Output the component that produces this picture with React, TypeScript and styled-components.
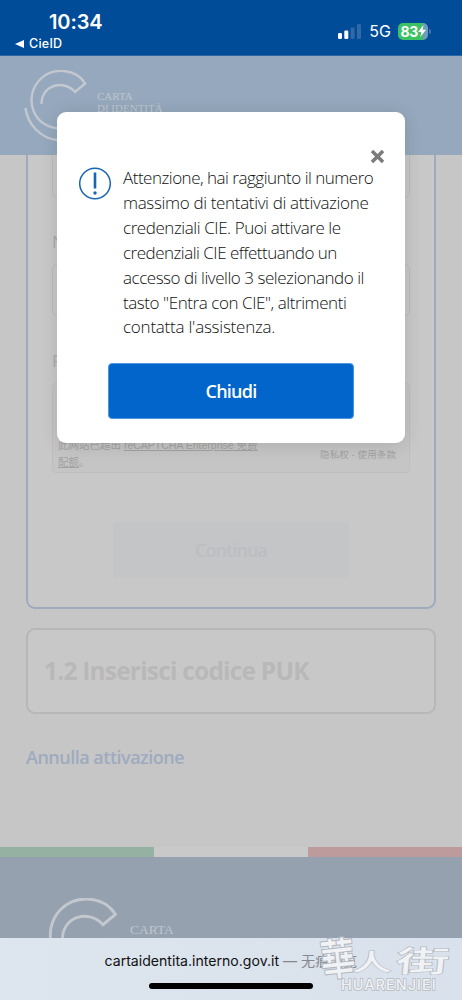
import React from "react";
import styled, { createGlobalStyle } from "styled-components";

const GlobalStyle = createGlobalStyle`
  * { box-sizing: border-box; }
  body { margin: 0; background: #c6c6c6; }
`;

const titleFont = `"Open Sans", "Noto Sans", sans-serif`;
const systemFont = `Inter, "Noto Sans CJK SC", sans-serif`;

const Screen = styled.div`
  position: relative;
  width: 462px;
  height: 1000px;
  overflow: hidden;
  display: flex;
  flex-direction: column;
  background: #c6c6c6;
  font-family: ${titleFont};
`;

const StatusBar = styled.header`
  flex: none;
  height: 56px;
  background: #004c98;
  border-bottom: 1px solid #2c66a2;
  color: #fff;
  display: flex;
  justify-content: space-between;
  font-family: ${systemFont};
`;

const StatusLeft = styled.div`
  padding: 10px 0 0 15px;
  display: flex;
  flex-direction: column;
`;

const Clock = styled.div`
  margin-left: 34px;
  font-size: 20px;
  line-height: 24px;
  font-weight: 600;
  letter-spacing: -0.1px;
`;

const BackLink = styled.div`
  display: flex;
  align-items: center;
  gap: 5px;
  margin-top: 2px;
  font-size: 12.5px;
  line-height: 16px;
  font-weight: 500;
  letter-spacing: 0.25px;
`;

const StatusRight = styled.div`
  display: flex;
  align-items: center;
  height: 20px;
  margin: 21px 31px 0 0;
`;

const Network = styled.span`
  margin: 0 7px 0 7px;
  font-size: 16px;
  letter-spacing: 0;
`;

const Battery = styled.div`
  width: 30px;
  height: 17px;
  border-radius: 5px;
  background: linear-gradient(90deg, #3cc265 83%, #6f9cba 83%);
  display: flex;
  align-items: center;
  padding-left: 2.5px;
  font-size: 14px;
  font-weight: 700;
  letter-spacing: -0.3px;
`;

const BatteryCap = styled.span`
  width: 2px;
  height: 5px;
  margin-left: 1px;
  border-radius: 0 2px 2px 0;
  background: #4478ad;
`;

const SiteHeader = styled.div`
  flex: none;
  height: 99px;
  background: #95a8bd;
  display: flex;
  padding: 14px 0 0 23px;
`;

const LogoName = styled.div<{ $size: number; $line: number; $top: number; $left: number }>`
  padding: ${(p) => p.$top}px 0 0 ${(p) => p.$left}px;
  font-family: "Liberation Serif", serif;
  font-size: ${(p) => p.$size}px;
  line-height: ${(p) => p.$line}px;
  color: #bec5cd;
  white-space: nowrap;
`;

const Main = styled.main`
  flex: none;
  height: 692px;
  padding: 0 26px;
`;

const StepCard = styled.section`
  height: 454px;
  border: 2px solid #9eabbe;
  border-top: 0;
  border-radius: 0 0 9px 9px;
  background: #c8c8c8;
  padding: 0 24px;
  display: flex;
  flex-direction: column;
`;

const Field = styled.div<{ $height: number; $open?: boolean }>`
  flex: none;
  height: ${(p) => p.$height}px;
  border: 1px solid #bbb;
  border-top-width: ${(p) => (p.$open ? 0 : 1)}px;
  border-radius: ${(p) => (p.$open ? "0 0 5px 5px" : "5px")};
`;

const FieldLabel = styled.div<{ $top: number }>`
  margin-top: ${(p) => p.$top}px;
  height: 24px;
  margin-bottom: 10px;
  font-size: 17px;
  line-height: 24px;
  font-weight: 400;
  color: #a8a8a8;
`;

const Captcha = styled.div`
  flex: none;
  height: 90px;
  border: 1px solid #bebebe;
  border-radius: 4px;
  background: #c5c5c5;
  color: #a2a2a2;
  padding: 53px 13px 0 5px;
  display: flex;
  justify-content: space-between;
  font-family: "Liberation Sans", "Noto Sans CJK SC", sans-serif;
  font-size: 10.5px;
  line-height: 17px;
`;

const CaptchaLinks = styled.div`
  padding-top: 9px;
  font-size: 9.5px;
  letter-spacing: 0.1px;
  white-space: nowrap;
`;

const ContinueButton = styled.button`
  align-self: center;
  margin-top: 49px;
  width: 236px;
  height: 56px;
  border: 0;
  border-radius: 4px;
  background: #c3c5c7;
  color: #bcbec1;
  font: 600 18px ${titleFont};
  letter-spacing: -0.9px;
`;

const NextCard = styled.section`
  margin-top: 19px;
  height: 86px;
  border: 2px solid #b7b7b7;
  border-radius: 9px;
  background: #c8c8c8;
  display: flex;
  align-items: center;
  padding-left: 16px;
`;

const NextTitle = styled.h2`
  margin: -2px 0 0;
  font-size: 24.5px;
  font-weight: 700;
  color: #b8b8b8;
  letter-spacing: -0.8px;
  white-space: nowrap;
`;

const CancelLink = styled.a`
  display: block;
  margin-top: 30px;
  font-size: 18px;
  line-height: 26px;
  font-weight: 600;
  letter-spacing: -0.5px;
  color: #9eabbf;
`;

const Flag = styled.div`
  flex: none;
  height: 10px;
  display: grid;
  grid-template-columns: repeat(3, 1fr);
`;

const FlagBand = styled.span<{ $color: string }>`
  background: ${(p) => p.$color};
`;

const Footer = styled.footer`
  flex: none;
  height: 81px;
  overflow: hidden;
  background: #95a1af;
  display: flex;
  padding: 41px 0 0 40px;
`;

const BrowserBar = styled.div`
  flex: none;
  height: 62px;
  background: linear-gradient(90deg, #dde5ee, #d9e1ec);
  display: flex;
  flex-direction: column;
  align-items: center;
  font-family: ${systemFont};
`;

const Address = styled.div`
  margin-top: 14px;
  font-size: 14.1px;
  line-height: 18px;
  color: #111;
  white-space: nowrap;
`;

const AddressNote = styled.span`
  color: #85898f;
`;

const HomeIndicator = styled.div`
  margin-top: 13px;
  width: 164px;
  height: 6px;
  border-radius: 3px;
  background: #000;
`;

const Modal = styled.div`
  position: absolute;
  left: 57px;
  top: 112px;
  width: 348px;
  height: 331px;
  border-radius: 9px;
  background: #fff;
  box-shadow: 0 2px 18px rgba(0, 0, 0, 0.12);
  display: flex;
  flex-direction: column;
`;

const CloseButton = styled.button`
  align-self: flex-end;
  margin: 38px 21px 0 0;
  width: 13px;
  height: 13px;
  padding: 0;
  border: 0;
  background: none;
  line-height: 0;
`;

const Message = styled.div`
  display: flex;
  gap: 12px;
  margin: 3px 0 0 22px;
  height: 174px;
`;

const MessageLines = styled.div`
  font-size: 17px;
  line-height: 24.9px;
  font-weight: 300;
  color: #111;
  white-space: nowrap;
`;

const Line = styled.div<{ $spacing: number }>`
  letter-spacing: ${(p) => p.$spacing}px;
`;

const PrimaryButton = styled.button`
  align-self: center;
  margin: 23px 0 0;
  width: 246px;
  height: 56px;
  border: 1px solid #4d97de;
  border-radius: 4px;
  background: #0265cc;
  color: #fff;
  font: 600 18px ${titleFont};
  letter-spacing: -0.75px;
`;

const Watermark = styled.div`
  position: absolute;
  left: 316px;
  top: 932px;
  width: 140px;
  height: 62px;
  color: #f0f2f5;
  -webkit-text-stroke: 1.5px #b3b8be;
  paint-order: stroke fill;
`;

const Brush = styled.span<{ $x: number; $y: number; $size: number; $scale: string }>`
  position: absolute;
  left: ${(p) => p.$x}px;
  top: ${(p) => p.$y}px;
  font: 500 ${(p) => p.$size}px/1 "Noto Sans CJK TC", sans-serif;
  transform: ${(p) => p.$scale};
  transform-origin: 0 0;
`;

const WatermarkName = styled.span`
  position: absolute;
  left: 25px;
  top: 45px;
  font: 500 14.5px/16px Inter, sans-serif;
  letter-spacing: 1px;
`;

function CieLogo({ width }: { width: number }) {
  return (
    <svg width={width} height={(width * 72) / 66} viewBox="0 0 66 72" fill="none" stroke="#c3c8cf" strokeWidth="2.4">
      <path d="M18.500 34C18.500 15 40.500 9 52 22L62.200 13.500C53-1.500 30-3.500 17 9.500C0 27 9.500 58.500 38 58.500" />
      <path d="M2.500 38C4.500 54 17 68 34 70" />
    </svg>
  );
}

const lines: [string, number][] = [
  ["Attenzione, hai raggiunto il numero", -0.5],
  ["massimo di tentativi di attivazione", -0.34],
  ["credenziali CIE. Puoi attivare le", -0.43],
  ["credenziali CIE effettuando un", -0.5],
  ["accesso di livello 3 selezionando il", -0.46],
  ['tasto "Entra con CIE", altrimenti', -0.43],
  ["contatta l'assistenza.", -0.23],
];

export default function App() {
  return (
    <Screen>
      <GlobalStyle />
      <StatusBar>
        <StatusLeft>
          <Clock>10:34</Clock>
          <BackLink>
            <svg width="9" height="8" viewBox="0 0 9 8"><path d="M0 4L9 0V8Z" fill="#fff" /></svg>
            CieID
          </BackLink>
        </StatusLeft>
        <StatusRight>
          <svg width="24" height="15" viewBox="0 0 24 15">
            <rect x="0" y="9" width="4" height="6" rx="1.200" fill="#fff" />
            <rect x="6.300" y="6.500" width="4" height="8.500" rx="1.200" fill="#fff" />
            <rect x="12.600" y="3.500" width="4" height="11.500" rx="1.200" fill="#3068a8" />
            <rect x="19" y="0" width="4" height="15" rx="1.200" fill="#3068a8" />
          </svg>
          <Network>5G</Network>
          <Battery>
            83
            <svg width="8" height="12" viewBox="0 0 8 12"><path d="M5.500 0L0 7H3.300L2.300 12L8 4.800H4.600Z" fill="#fff" /></svg>
          </Battery>
          <BatteryCap />
        </StatusRight>
      </StatusBar>

      <SiteHeader>
        <CieLogo width={66} />
        <LogoName $size={11} $line={12} $top={20} $left={8}>CARTA<br />DI IDENTITÀ</LogoName>
      </SiteHeader>

      <Main>
        <StepCard>
          <Field $height={43} $open />
          <FieldLabel $top={32}>Numero</FieldLabel>
          <Field $height={52} />
          <FieldLabel $top={33}>Per</FieldLabel>
          <Captcha>
            <div>
              此网站已超出 <u>reCAPTCHA Enterprise 免费</u><br /><u>配额</u>。
            </div>
            <CaptchaLinks>隐私权 - 使用条款</CaptchaLinks>
          </Captcha>
          <ContinueButton>Continua</ContinueButton>
        </StepCard>
        <NextCard>
          <NextTitle>1.2 Inserisci codice PUK</NextTitle>
        </NextCard>
        <CancelLink>Annulla attivazione</CancelLink>
      </Main>

      <Flag>
        <FlagBand $color="#95b1a1" />
        <FlagBand $color="#c9c9c9" />
        <FlagBand $color="#bd9b9d" />
      </Flag>
      <Footer>
        <CieLogo width={80} />
        <LogoName $size={13.5} $line={16} $top={24} $left={10}>CARTA</LogoName>
      </Footer>
      <BrowserBar>
        <Address>
          cartaidentita.interno.gov.it <AddressNote>— 无痕浏览</AddressNote>
        </Address>
        <HomeIndicator />
      </BrowserBar>

      <Modal>
        <CloseButton aria-label="Chiudi">
          <svg width="13" height="13" viewBox="0 0 13 13"><path d="M2.200 2.200L10.800 10.800M10.800 2.200L2.200 10.800" stroke="#7b7b7b" strokeWidth="3.500" strokeLinecap="square" /></svg>
        </CloseButton>
        <Message>
          <svg width="32" height="38" viewBox="0 0 32 38" fill="none" stroke="#1765b5">
            <circle cx="16" cy="17.500" r="15.300" strokeWidth="1.500" />
            <path d="M16 6.500V22.500" strokeWidth="2.600" />
            <circle cx="16" cy="27" r="1.700" fill="#1765b5" stroke="none" />
          </svg>
          <MessageLines>
            {lines.map(([text, spacing]) => (
              <Line key={text} $spacing={spacing}>{text}</Line>
            ))}
          </MessageLines>
        </Message>
        <PrimaryButton>Chiudi</PrimaryButton>
      </Modal>

      <Watermark>
        <Brush $x={2} $y={4} $size={30} $scale="rotate(-6deg) scale(1.15, 1.45)">華</Brush>
        <Brush $x={36} $y={17} $size={36} $scale="scale(1.1, 0.65)">人</Brush>
        <Brush $x={82} $y={13} $size={38} $scale="skewX(-6deg) scale(1.4, 0.78)">街</Brush>
        <WatermarkName>HUARENJIEI</WatermarkName>
      </Watermark>
    </Screen>
  );
}
